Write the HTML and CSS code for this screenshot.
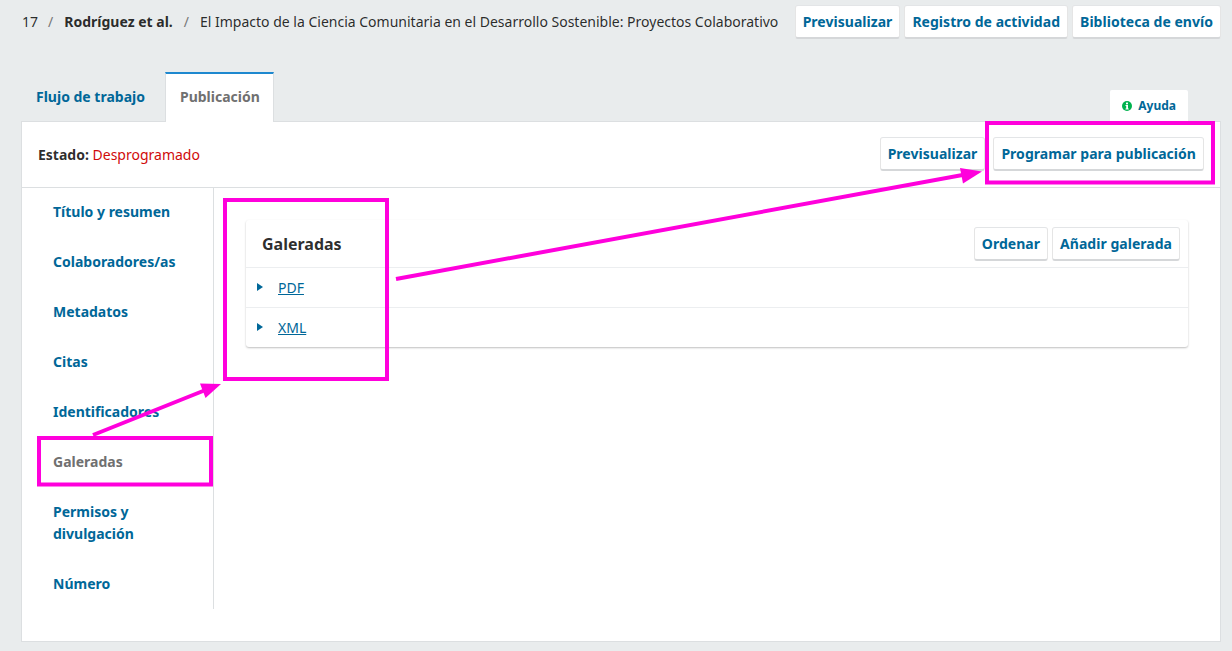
FILE: index.html
```html
<!DOCTYPE html>
<html lang="es">
<head>
    <meta charset="UTF-8">
    <title>Galeradas</title>
    <link rel="stylesheet" href="styles.css">
</head>
<body>
    <header class="top-bar">
        <div class="crumbs">
            <span>17</span>
            <span class="crumb-sep">/</span>
            <b>Rodríguez et al.</b>
            <span class="crumb-sep">/</span>
            <span>El Impacto de la Ciencia Comunitaria en el Desarrollo Sostenible: Proyectos Colaborativo</span>
        </div>
        <div class="top-actions">
            <a class="btn">Previsualizar</a>
            <a class="btn">Registro de actividad</a>
            <a class="btn">Biblioteca de envío</a>
        </div>
    </header>

    <div class="tabs-row">
        <a class="tab">Flujo de trabajo</a>
        <a class="tab tab-active">Publicación</a>
        <a class="help-tab">
            <svg width="10" height="10" viewBox="0 0 10 10"><circle cx="5" cy="5" r="5" fill="#00b24e"/><rect x="4" y="1.6" width="2" height="1.7" fill="#fff"/><path d="M3.5 4h2.5v3.4h.7v1H3.500v-1h.7V5h-.7z" fill="#fff"/></svg>
            Ayuda
        </a>
    </div>

    <main class="panel">
        <div class="panel-head">
            <div class="status"><b>Estado:</b> <span class="status-value">Desprogramado</span></div>
            <div class="panel-actions">
                <a class="btn">Previsualizar</a>
                <a class="btn">Programar para publicación</a>
            </div>
        </div>
        <div class="panel-body">
            <nav class="side-nav">
                <a class="side-item">Título y resumen</a>
                <a class="side-item">Colaboradores/as</a>
                <a class="side-item">Metadatos</a>
                <a class="side-item">Citas</a>
                <a class="side-item">Identificadores</a>
                <a class="side-item side-active">Galeradas</a>
                <a class="side-item">Permisos y divulgación</a>
                <a class="side-item">Número</a>
            </nav>
            <section class="content">
                <div class="card">
                    <div class="card-head">
                        <h2>Galeradas</h2>
                        <div class="card-actions">
                            <a class="btn">Ordenar</a>
                            <a class="btn">Añadir galerada</a>
                        </div>
                    </div>
                    <div class="card-row"><span class="caret"></span><a class="row-link">PDF</a></div>
                    <div class="card-row"><span class="caret"></span><a class="row-link">XML</a></div>
                </div>
            </section>
        </div>
    </main>

    <!-- callouts drawn over the screenshot -->
    <svg class="marks" width="1232" height="651" viewBox="0 0 1232 651">
        <g fill="none" stroke="#ff00dc" stroke-width="4">
            <rect x="987" y="123" width="226" height="59.500"/>
            <rect x="225" y="200" width="162" height="179"/>
            <rect x="39" y="438" width="172" height="46.500"/>
            <path d="M396 279 L968 174"/>
            <path d="M93 435 L208 389"/>
        </g>
        <g fill="#ff00dc">
            <path d="M982 171.500 L960 168 L963 183.500z"/>
            <path d="M221 384 L200 383.500 L205.500 398z"/>
        </g>
    </svg>
</body>
</html>
```

FILE: styles.css
```css
body {
    margin: 0;
    height: 651px;
    overflow: hidden;
    background-color: #e9eced;
    font-family: "Noto Sans", sans-serif;
    font-size: 14px;
    line-height: 20px;
    color: rgba(0, 0, 0, 0.84);
}
.top-bar {
    display: flex;
    justify-content: space-between;
    align-items: center;
    padding: 5px 11px 0 22px;
    height: 34px;
}
.crumbs {
    display: flex;
    align-items: center;
    white-space: nowrap;
}
.crumbs b {
    margin-right: 1px;
}
.crumb-sep {
    margin: 0 11px 0 10px;
    color: #777;
}
.top-actions, .card-actions {
    display: flex;
    gap: 4px;
}
.panel-actions {
    display: flex;
    gap: 8px;
    margin-top: -1px;
}
.btn {
    display: block;
    padding: 6px 7px 5px;
    background-color: #fff;
    border: 1px solid rgba(0, 0, 0, 0.1);
    border-top-color: #e3e5e7;
    border-bottom-color: #d5d7d9;
    border-bottom-width: 2px;
    border-radius: 3px;
    font-size: 14px;
    line-height: 20px;
    font-weight: 700;
    letter-spacing: 0.03px;
    color: #006798;
    white-space: nowrap;
}
.tabs-row {
    display: flex;
    align-items: flex-end;
    height: 82px;
    padding-left: 22px;
}
.tab {
    display: block;
    padding: 14px;
    height: 20px;
    font-weight: 700;
    color: #006798;
}
.tab-active {
    position: relative;
    height: 20px;
    margin-left: 6px;
    margin-bottom: -1px;
    padding: 13px 13px 15px 14px;
    background-color: #fff;
    border-top: 2px solid #1e88cf;
    border-left: 1px solid #dcdfe1;
    border-right: 1px solid #dcdfe1;
    color: #707070;
}
.help-tab {
    display: flex;
    align-items: center;
    gap: 6px;
    margin-left: auto;
    margin-right: 44px;
    padding: 0 12px;
    height: 31px;
    background-color: #fff;
    border-radius: 2px 2px 0 0;
    font-size: 12px;
    font-weight: 700;
    color: #006798;
}
.panel {
    margin: 0 11px 0 21px;
    height: 519px;
    background-color: #fff;
    border: 1px solid #dcdfe1;
}
.panel-head {
    display: flex;
    justify-content: space-between;
    align-items: center;
    height: 65px;
    padding: 0 16px;
    border-bottom: 1px solid #dcdfe1;
}
.status-value {
    color: #d00a0a;
}
.panel-body {
    display: flex;
}
.side-nav {
    width: 191px;
    margin-top: -1px;
    border-right: 1px solid #dcdfe1;
}
.side-item {
    display: block;
    padding: 14px 31px;
    line-height: 22px;
    font-weight: 700;
    color: #006798;
}
.side-active {
    color: #707070;
}
.content {
    flex: 1;
    padding: 32px 32px 0;
}
.card {
    background-color: #fff;
    border-radius: 3px;
    box-shadow: 0 1px 2px rgba(0, 0, 0, 0.25);
}
.card-head {
    display: flex;
    justify-content: space-between;
    align-items: center;
    height: 47px;
    padding: 0 8px 0 16px;
    border-bottom: 1px solid #eceef0;
}
.card-head h2 {
    margin: 0;
    font-size: 16px;
    font-weight: 700;
    line-height: 20px;
}
.card-actions {
    margin-top: 1px;
}
.card-row {
    display: flex;
    align-items: center;
    height: 39px;
    padding-left: 11px;
    border-bottom: 1px solid #eceef0;
}
.card-row:last-child {
    border-bottom: 0;
}
.caret {
    width: 0;
    height: 0;
    border-left: 6px solid #006798;
    border-top: 4px solid transparent;
    border-bottom: 4px solid transparent;
    margin-right: 15px;
    margin-top: -2px;
}
.row-link {
    color: #006798;
    text-decoration: underline;
}
.marks {
    position: absolute;
    left: 0;
    top: 0;
}
```
